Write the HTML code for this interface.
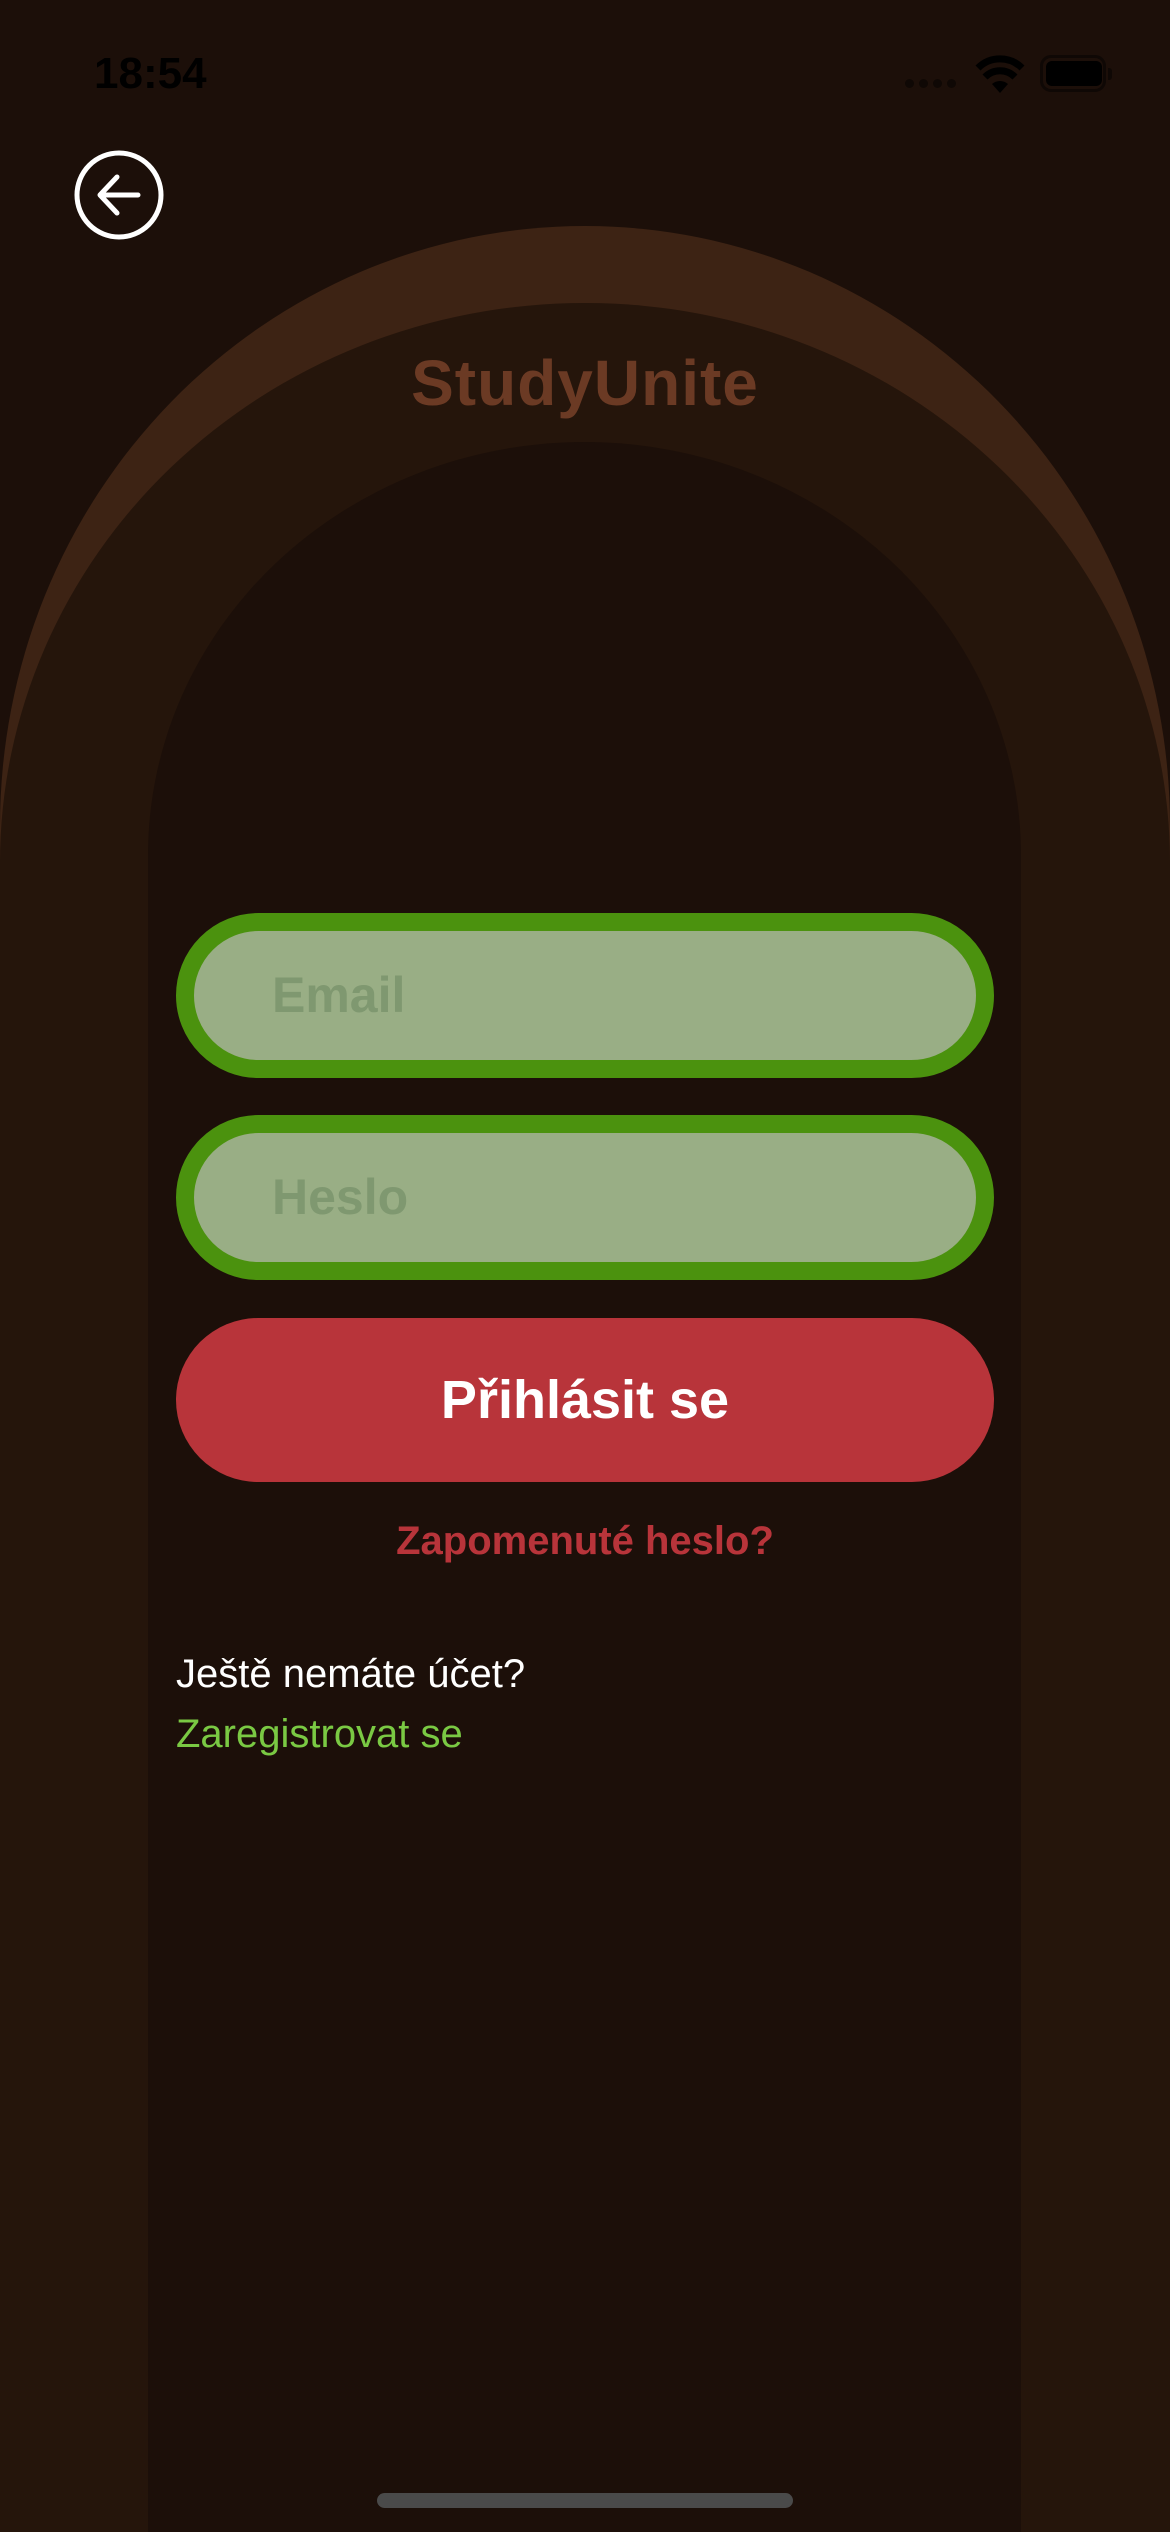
<!DOCTYPE html>
<html><head><meta charset="utf-8"><style>
html,body{margin:0;padding:0;background:#1c0f09}
#w{width:1170px;height:2532px;position:relative;overflow:hidden;background:#1c0f09;font-family:"Liberation Sans",sans-serif}
.abs{position:absolute}
.outer{left:0;top:226px;bottom:0;width:1170px;background:#3d2314;border-radius:585px 585px 0 0/600px 600px 0 0}
.mid{left:0;top:303px;bottom:0;width:1170px;background:#25150b;border-radius:585px 585px 0 0/560px 560px 0 0}
.inner{left:148px;top:442px;bottom:0;width:873px;background:#1c0f09;border-radius:437px 437px 0 0/414px 414px 0 0}
.title{left:0;width:1170px;top:346px;text-align:center;color:#6b3a24;font-size:64px;font-weight:bold;letter-spacing:1px}
.field{left:176px;width:818px;height:165px;box-sizing:border-box;border:18px solid #4b920e;border-radius:83px;background:#99ae85;color:#7f9870;font-size:50px;font-weight:bold;line-height:129px;padding-left:78px}
.btn{left:176px;width:818px;top:1318px;height:164px;border-radius:82px;background:#b8343a;color:#fff;font-size:54px;font-weight:bold;text-align:center;line-height:164px}
.forgot{left:0;width:1170px;top:1519px;text-align:center;color:#b8343a;font-size:40px;font-weight:bold}
.t1{left:176px;top:1652px;color:#fff;font-size:40px}
.t2{left:176px;top:1712px;color:#7ac943;font-size:40px}
</style></head><body><div id="w">
<div class="abs outer"></div>
<div class="abs mid"></div>
<div class="abs inner"></div>
<div class="abs" style="left:94px;top:49px;color:#000;font-size:44px;font-weight:bold">18:54</div>
<div class="abs" style="left:905px;top:79px;width:92px;height:10px">
<span class="abs" style="left:0;width:9px;height:9px;border-radius:50%;background:#0f0805"></span>
<span class="abs" style="left:14px;width:9px;height:9px;border-radius:50%;background:#0f0805"></span>
<span class="abs" style="left:28px;width:9px;height:9px;border-radius:50%;background:#0f0805"></span>
<span class="abs" style="left:42px;width:9px;height:9px;border-radius:50%;background:#0f0805"></span>
</div>
<svg class="abs" style="left:975px;top:55px" width="50" height="38" viewBox="0 0 50 38">
<path d="M25 38 L17 29 A12 12 0 0 1 33 29 Z" fill="#000"/>
<path d="M10 22 A21 21 0 0 1 40 22" stroke="#000" stroke-width="7" fill="none"/>
<path d="M3 13 A31 31 0 0 1 47 13" stroke="#000" stroke-width="7" fill="none"/>
</svg>
<div class="abs" style="left:1040px;top:55px;width:66px;height:37px;box-sizing:border-box;border:3px solid #0f0805;border-radius:11px"></div>
<div class="abs" style="left:1046px;top:61px;width:56px;height:25px;background:#000;border-radius:6px"></div>
<div class="abs" style="left:1108px;top:68px;width:4px;height:12px;background:#0f0805;border-radius:0 3px 3px 0"></div>
<svg class="abs" style="left:72px;top:148px" width="94" height="94" viewBox="0 0 94 94">
<circle cx="47" cy="47" r="42" stroke="#fff" stroke-width="5" fill="none"/>
<path d="M66 47 H29 M45 29 L28 47 L45 65" stroke="#fff" stroke-width="5" fill="none" stroke-linecap="round" stroke-linejoin="round"/>
</svg>
<div class="abs title">StudyUnite</div>
<div class="abs field" style="top:913px">Email</div>
<div class="abs field" style="top:1115px">Heslo</div>
<div class="abs btn">Přihlásit se</div>
<div class="abs forgot">Zapomenuté heslo?</div>
<div class="abs t1">Ještě nemáte účet?</div>
<div class="abs t2">Zaregistrovat se</div>
<div class="abs" style="left:377px;top:2493px;width:416px;height:15px;border-radius:8px;background:#4a4a4a"></div>
</div></body></html>
